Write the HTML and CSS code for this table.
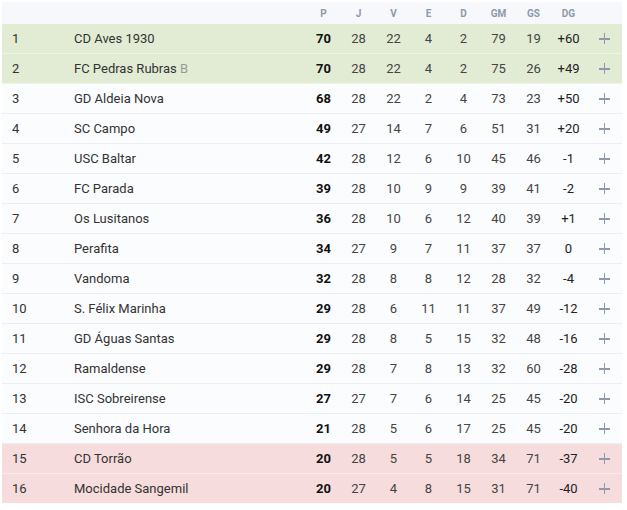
FILE: index.html
```html
<!DOCTYPE html>
<html lang="pt">
<head>
<meta charset="utf-8">
<title>Classificação</title>
<link rel="stylesheet" href="styles.css">
</head>
<body>
<table class="standings">
  <colgroup>
    <col class="c-rank"><col class="c-team">
    <col class="c-stat"><col class="c-stat"><col class="c-stat"><col class="c-stat"><col class="c-stat"><col class="c-stat"><col class="c-stat"><col class="c-stat"><col class="c-more">
  </colgroup>
  <thead>
    <tr><th></th><th></th><th>P</th><th>J</th><th>V</th><th>E</th><th>D</th><th>GM</th><th>GS</th><th>DG</th><th></th></tr>
  </thead>
  <tbody>
    <tr class="promo"><td class="rank">1</td><td class="team">CD Aves 1930</td><td class="pts">70</td><td>28</td><td>22</td><td>4</td><td>2</td><td>79</td><td>19</td><td class="dg">+60</td><td class="more"><span class="plus"></span></td></tr>
    <tr class="promo"><td class="rank">2</td><td class="team">FC Pedras Rubras <span class="sub">B</span></td><td class="pts">70</td><td>28</td><td>22</td><td>4</td><td>2</td><td>75</td><td>26</td><td class="dg">+49</td><td class="more"><span class="plus"></span></td></tr>
    <tr><td class="rank">3</td><td class="team">GD Aldeia Nova</td><td class="pts">68</td><td>28</td><td>22</td><td>2</td><td>4</td><td>73</td><td>23</td><td class="dg">+50</td><td class="more"><span class="plus"></span></td></tr>
    <tr><td class="rank">4</td><td class="team">SC Campo</td><td class="pts">49</td><td>27</td><td>14</td><td>7</td><td>6</td><td>51</td><td>31</td><td class="dg">+20</td><td class="more"><span class="plus"></span></td></tr>
    <tr><td class="rank">5</td><td class="team">USC Baltar</td><td class="pts">42</td><td>28</td><td>12</td><td>6</td><td>10</td><td>45</td><td>46</td><td class="dg">-1</td><td class="more"><span class="plus"></span></td></tr>
    <tr><td class="rank">6</td><td class="team">FC Parada</td><td class="pts">39</td><td>28</td><td>10</td><td>9</td><td>9</td><td>39</td><td>41</td><td class="dg">-2</td><td class="more"><span class="plus"></span></td></tr>
    <tr><td class="rank">7</td><td class="team">Os Lusitanos</td><td class="pts">36</td><td>28</td><td>10</td><td>6</td><td>12</td><td>40</td><td>39</td><td class="dg">+1</td><td class="more"><span class="plus"></span></td></tr>
    <tr><td class="rank">8</td><td class="team">Perafita</td><td class="pts">34</td><td>27</td><td>9</td><td>7</td><td>11</td><td>37</td><td>37</td><td class="dg">0</td><td class="more"><span class="plus"></span></td></tr>
    <tr><td class="rank">9</td><td class="team">Vandoma</td><td class="pts">32</td><td>28</td><td>8</td><td>8</td><td>12</td><td>28</td><td>32</td><td class="dg">-4</td><td class="more"><span class="plus"></span></td></tr>
    <tr><td class="rank">10</td><td class="team">S. Félix Marinha</td><td class="pts">29</td><td>28</td><td>6</td><td>11</td><td>11</td><td>37</td><td>49</td><td class="dg">-12</td><td class="more"><span class="plus"></span></td></tr>
    <tr><td class="rank">11</td><td class="team">GD Águas Santas</td><td class="pts">29</td><td>28</td><td>8</td><td>5</td><td>15</td><td>32</td><td>48</td><td class="dg">-16</td><td class="more"><span class="plus"></span></td></tr>
    <tr><td class="rank">12</td><td class="team">Ramaldense</td><td class="pts">29</td><td>28</td><td>7</td><td>8</td><td>13</td><td>32</td><td>60</td><td class="dg">-28</td><td class="more"><span class="plus"></span></td></tr>
    <tr><td class="rank">13</td><td class="team">ISC Sobreirense</td><td class="pts">27</td><td>27</td><td>7</td><td>6</td><td>14</td><td>25</td><td>45</td><td class="dg">-20</td><td class="more"><span class="plus"></span></td></tr>
    <tr><td class="rank">14</td><td class="team">Senhora da Hora</td><td class="pts">21</td><td>28</td><td>5</td><td>6</td><td>17</td><td>25</td><td>45</td><td class="dg">-20</td><td class="more"><span class="plus"></span></td></tr>
    <tr class="releg"><td class="rank">15</td><td class="team">CD Torrão</td><td class="pts">20</td><td>28</td><td>5</td><td>5</td><td>18</td><td>34</td><td>71</td><td class="dg">-37</td><td class="more"><span class="plus"></span></td></tr>
    <tr class="releg last"><td class="rank">16</td><td class="team">Mocidade Sangemil</td><td class="pts">20</td><td>27</td><td>4</td><td>8</td><td>15</td><td>31</td><td>71</td><td class="dg">-40</td><td class="more"><span class="plus"></span></td></tr>
  </tbody>
</table>
</body>
</html>
```
FILE: styles.css
```css
html, body {
  margin: 0;
  padding: 0;
  background: #ffffff;
}
body {
  padding: 2px;
  font-family: Roboto, "Liberation Sans", Arial, sans-serif;
}
.standings {
  width: 620px;
  border-collapse: collapse;
  table-layout: fixed;
  font-size: 13px;
  color: #444;
}
.c-rank { width: 60px; }
.c-team { width: 244px; }
.c-stat { width: 35px; }
.c-more { width: 36px; }

.standings thead th {
  height: 22px;
  padding: 0;
  background: #f7f8fc;
  font-size: 10px;
  font-weight: 700;
  color: #8e98aa;
  text-align: center;
  vertical-align: middle;
}
.standings tbody td {
  height: 29px;
  padding: 0;
  text-align: center;
  vertical-align: middle;
  background: #fbfcfe;
  border-bottom: 1px solid #eceef3;
}
.standings tbody tr.promo td {
  background: #e2ecd4;
  border-bottom-color: #eef3e6;
}
.standings tbody tr.releg td {
  background: #f6dcdc;
  border-bottom-color: #faeaea;
}
.standings tbody tr.last td {
  border-bottom-color: #fbfcfe;
}
.standings td.rank {
  text-align: left;
  padding-left: 10px;
  color: #333;
}
.standings td.team {
  text-align: left;
  padding-left: 12px;
  color: #333;
}
.sub { color: #9a9a9a; }
.standings td.pts {
  font-weight: 700;
  color: #111;
}
.standings td.dg { color: #222; }
.plus {
  display: inline-block;
  position: relative;
  top: -1px;
  width: 11px;
  height: 11px;
  vertical-align: middle;
}
.plus::before, .plus::after {
  content: "";
  position: absolute;
  background: #8f99ab;
}
.plus::before { left: 0; top: 5px; width: 11px; height: 1.5px; }
.plus::after { left: 5px; top: 0; width: 1.5px; height: 11px; }
```
